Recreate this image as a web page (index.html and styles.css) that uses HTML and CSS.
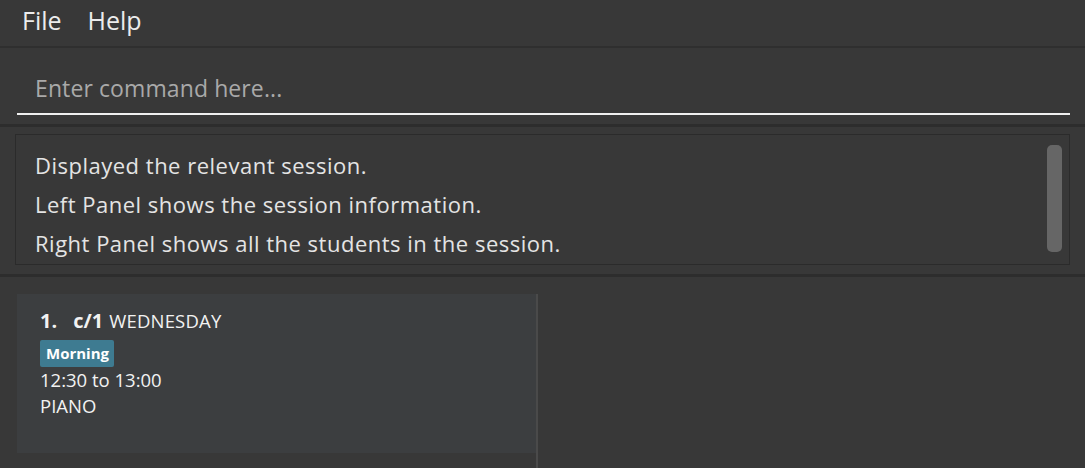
FILE: index.html
```html
<!DOCTYPE html>
<html>
<head>
<meta charset="utf-8">
<link rel="stylesheet" href="styles.css">
</head>
<body>
<div class="app">
  <div class="menubar">
    <span class="menu-item">File</span>
    <span class="menu-item">Help</span>
  </div>
  <div class="command">
    <div class="command-field">Enter command here...</div>
  </div>
  <div class="result">
    <div class="result-box">
      <div class="result-text">
        <p>Displayed the relevant session.</p>
        <p>Left Panel shows the session information.</p>
        <p>Right Panel shows all the students in the session.</p>
      </div>
      <div class="scrollbar"><div class="thumb"></div></div>
    </div>
  </div>
  <div class="panes">
    <div class="left-pane">
      <div class="card">
        <div class="card-title"><span class="idx">1.</span><span class="code">c/1</span><span class="day">WEDNESDAY</span></div>
        <div class="tags"><span class="tag">Morning</span></div>
        <div class="line">12:30 to 13:00</div>
        <div class="line">PIANO</div>
      </div>
    </div>
    <div class="divider"></div>
    <div class="right-pane"></div>
  </div>
</div>
</body>
</html>
```

FILE: styles.css
```css
html, body {
  margin: 0;
  padding: 0;
  background: #383838;
  width: 1085px;
  height: 468px;
  overflow: hidden;
  font-family: "Open Sans", "Noto Sans", sans-serif;
}
.app {
  display: flex;
  flex-direction: column;
  height: 468px;
}
.menubar {
  display: flex;
  align-items: center;
  gap: 26px;
  padding-left: 22px;
  padding-bottom: 6px;
  box-sizing: border-box;
  border-bottom: 2px solid #2f2f2f;
  height: 48px;
}
.menu-item {
  color: #ececec;
  font-size: 25px;
}
.command {
  height: 79px;
  box-sizing: border-box;
  padding: 0 15px 0 17px;
  border-bottom: 3px solid #2d2d2d;
  display: flex;
  align-items: flex-end;
}
.command-field {
  flex: 1;
  height: 66px;
  box-sizing: border-box;
  border-bottom: 2px solid #f0f0f0;
  color: #a9a9a9;
  font-size: 23px;
  letter-spacing: 0.1px;
  padding-left: 18px;
  padding-top: 23px;
  margin-bottom: 9px;
}
.result {
  height: 150px;
  box-sizing: border-box;
  padding: 7px 15px 0 15px;
  border-bottom: 3px solid #2d2d2d;
}
.result-box {
  height: 131px;
  box-sizing: border-box;
  border: 1px solid #2b2b2b;
  display: flex;
}
.result-text {
  flex: 1;
  padding: 11px 0 0 19px;
  color: #e4e4e4;
  font-size: 22px;
  letter-spacing: 0.5px;
}
.result-text p {
  margin: 0;
  line-height: 39px;
}
.scrollbar {
  width: 22px;
  padding-top: 10px;
}
.thumb {
  width: 15px;
  height: 107px;
  background: #666666;
  border-radius: 5px;
}
.panes {
  flex: 1;
  display: flex;
}
.left-pane {
  width: 519px;
  padding: 17px 0 0 17px;
}
.divider {
  width: 2px;
  background: #4a4a4a;
  margin-top: 17px;
}
.right-pane {
  flex: 1;
}
.card {
  height: 159px;
  background: #3c3e40;
  box-sizing: border-box;
  padding: 13px 0 0 23px;
  color: #f2f2f2;
}
.card-title {
  display: flex;
  align-items: baseline;
  height: 31px;
}
.idx {
  font-weight: 700;
  font-size: 20px;
  margin-right: 16px;
}
.code {
  font-weight: 700;
  font-size: 20px;
  margin-right: 6px;
}
.day {
  font-size: 18.5px;
  letter-spacing: 0.2px;
}
.tags {
  height: 27px;
  display: flex;
  align-items: center;
  margin-top: 2px;
}
.tag {
  background: #3e7b91;
  color: #ffffff;
  font-weight: 700;
  font-size: 15px;
  line-height: 27px;
  padding: 0 5px 0 6px;
  border-radius: 2px;
}
.line {
  font-size: 18.5px;
  line-height: 26px;
}
```
